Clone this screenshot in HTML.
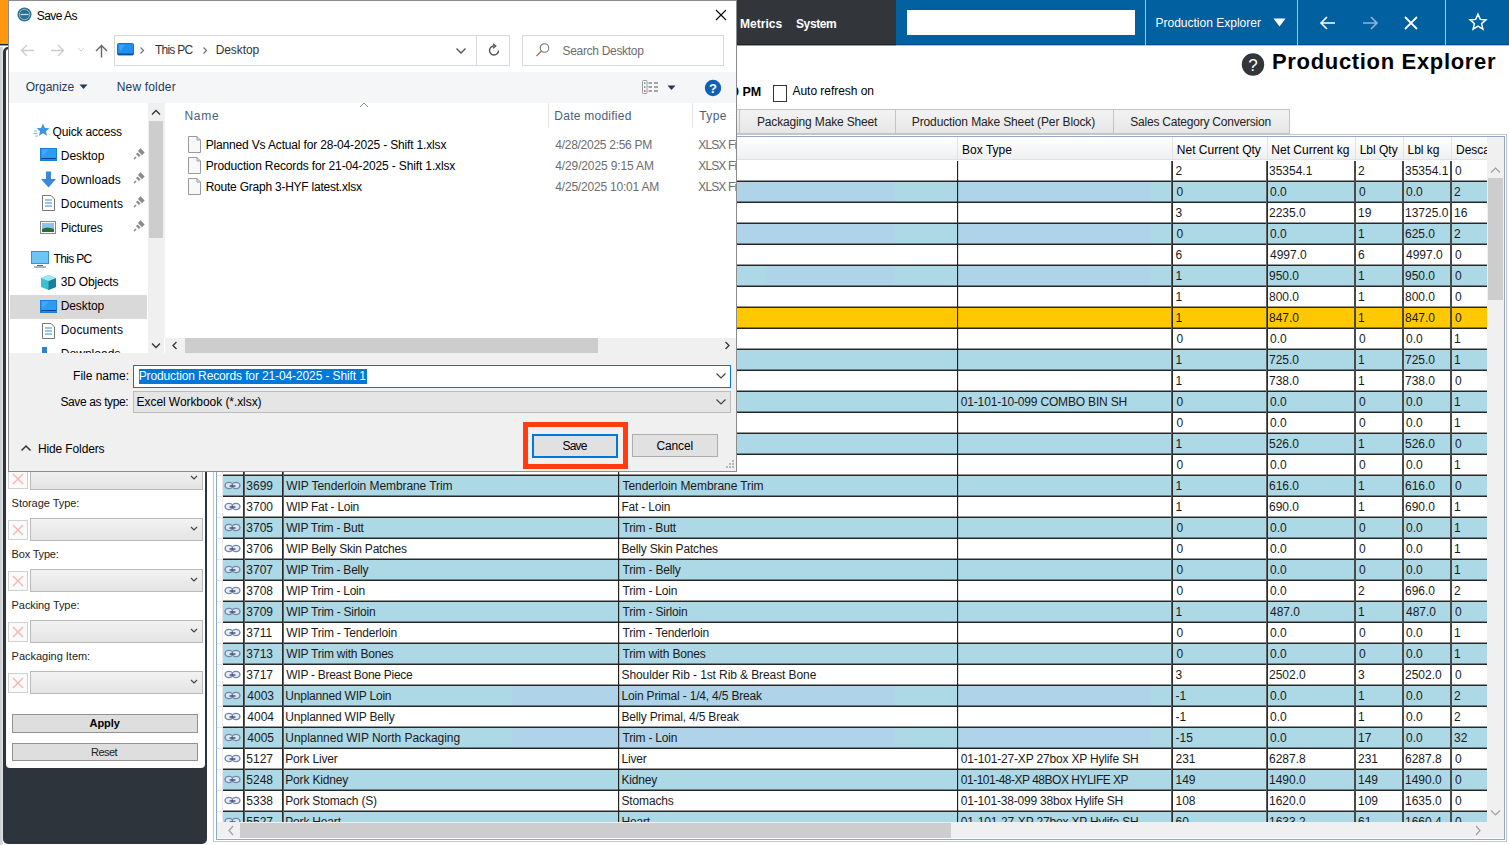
<!DOCTYPE html><html><head><meta charset="utf-8"><style>*{margin:0;padding:0}
html,body{width:1509px;height:845px;overflow:hidden;background:#fff;position:relative;font-family:"Liberation Sans", sans-serif}
div,span,svg{position:absolute}
span{white-space:nowrap}
svg text{font-family:"Liberation Sans"}
</style></head><body>
<div style="left:0px;top:47px;width:3px;height:798px;background:linear-gradient(90deg,#c9ccd0,#dfe1e3)"></div>
<div style="left:0px;top:0px;width:896px;height:45px;background:#32363b"></div>
<div style="left:896px;top:0px;width:613px;height:45px;background:#0060a0"></div>
<div style="left:896px;top:44px;width:613px;height:1px;background:#004c8f"></div>
<div style="left:0px;top:44px;width:896px;height:1px;background:#1f2428"></div>
<div style="left:896px;top:45px;width:613px;height:1px;background:#a9c6dc"></div>
<div style="left:0px;top:45px;width:896px;height:1px;background:#9a9c9e"></div>
<div style="left:907px;top:10px;width:228px;height:25px;background:#fff"></div>
<div style="left:0px;top:0px;width:8px;height:44px;background:#ff9710"></div>
<div style="left:1145px;top:0px;width:1px;height:45px;background:#a9c4dd"></div>
<div style="left:1297px;top:0px;width:1px;height:45px;background:#a9c4dd"></div>
<div style="left:1445px;top:0px;width:1px;height:45px;background:#a9c4dd"></div>
<span style="left:740.10px;top:17.64px;font-size:12px;line-height:12px;color:#fff;font-weight:bold;letter-spacing:0.000px;">Metrics</span>
<span style="left:796.00px;top:17.64px;font-size:12px;line-height:12px;color:#fff;font-weight:bold;letter-spacing:-0.400px;">System</span>
<span style="left:1155.50px;top:17.14px;font-size:12px;line-height:12px;color:#fff;font-weight:normal;letter-spacing:0.000px;">Production Explorer</span>
<svg style="left:1273px;top:18px;" width="13" height="9" viewBox="0 0 13 9"><path d="M0.5 0.5 L12.5 0.5 L6.5 8.5 Z" fill="#fff"/></svg>
<svg style="left:1318px;top:14px;" width="20" height="18" viewBox="0 0 20 18"><path d="M17 9 H3 M9 3 L3 9 L9 15" stroke="#fff" stroke-width="1.6" fill="none"/></svg>
<svg style="left:1360px;top:14px;" width="20" height="18" viewBox="0 0 20 18"><path d="M3 9 H17 M11 3 L17 9 L11 15" stroke="#8fb3d6" stroke-width="1.6" fill="none"/></svg>
<svg style="left:1402px;top:14px;" width="18" height="18" viewBox="0 0 18 18"><path d="M3 3 L15 15 M15 3 L3 15" stroke="#fff" stroke-width="1.8" fill="none"/></svg>
<svg style="left:1468px;top:12px;" width="20" height="20" viewBox="0 0 20 20"><path d="M10 2.2 L12.3 7.4 L17.9 7.9 L13.6 11.6 L14.9 17.1 L10 14.2 L5.1 17.1 L6.4 11.6 L2.1 7.9 L7.7 7.4 Z" stroke="#fff" stroke-width="1.5" fill="none" stroke-linejoin="miter"/></svg>
<svg style="left:1241px;top:53px;" width="24" height="24" viewBox="0 0 24 24"><circle cx="12" cy="11.5" r="11.2" fill="#32363b"/><text x="12" y="17.5" text-anchor="middle" font-family="Liberation Sans" font-size="17" fill="#fff">?</text></svg>
<span style="left:1272.00px;top:50.78px;font-size:22px;line-height:22px;color:#000;font-weight:bold;letter-spacing:0.667px;">Production Explorer</span>
<span style="left:725.00px;top:86.42px;font-size:12.5px;line-height:12.5px;color:#000;font-weight:bold;letter-spacing:0.000px;">00 PM</span>
<div style="left:773px;top:85px;width:14px;height:17px;border:1px solid #333;box-sizing:border-box;background:#fff"></div>
<span style="left:792.50px;top:85.14px;font-size:12px;line-height:12px;color:#000;font-weight:normal;letter-spacing:-0.036px;">Auto refresh on</span>
<div style="left:700px;top:109px;width:40px;height:25px;box-sizing:border-box;border:1px solid #c4c4c4;background:linear-gradient(#f3f3f3,#e6e6e6)"></div>
<div style="left:739px;top:109px;width:157px;height:25px;box-sizing:border-box;border:1px solid #c4c4c4;background:linear-gradient(#f3f3f3,#e6e6e6)"></div>
<span style="left:757.00px;top:116.14px;font-size:12px;line-height:12px;color:#222;font-weight:normal;letter-spacing:-0.158px;">Packaging Make Sheet</span>
<div style="left:895px;top:109px;width:219px;height:25px;box-sizing:border-box;border:1px solid #c4c4c4;background:linear-gradient(#f3f3f3,#e6e6e6)"></div>
<span style="left:911.80px;top:116.14px;font-size:12px;line-height:12px;color:#222;font-weight:normal;letter-spacing:-0.125px;">Production Make Sheet (Per Block)</span>
<div style="left:1113px;top:109px;width:177px;height:25px;box-sizing:border-box;border:1px solid #c4c4c4;background:linear-gradient(#f3f3f3,#e6e6e6)"></div>
<span style="left:1130.30px;top:116.14px;font-size:12px;line-height:12px;color:#222;font-weight:normal;letter-spacing:-0.221px;">Sales Category Conversion</span>
<div style="left:213px;top:134px;width:1294px;height:708px;box-sizing:border-box;border:1px solid #c6c6c6;background:#fff"></div>
<div style="left:216px;top:136px;width:1289px;height:704px;box-sizing:border-box;border:1px solid #8eaacb;background:#fff"></div>
<div style="left:217px;top:137px;width:1270px;height:23px;background:linear-gradient(#ffffff 0%,#f8f8f9 45%,#eeeff1 100%)"></div>
<div style="left:217px;top:159px;width:1270px;height:1px;background:#e2e2e2"></div>
<div style="left:243px;top:137px;width:1px;height:23px;background:#e3e3e3"></div>
<div style="left:282px;top:137px;width:1px;height:23px;background:#e3e3e3"></div>
<div style="left:618px;top:137px;width:1px;height:23px;background:#e3e3e3"></div>
<div style="left:957px;top:137px;width:1px;height:23px;background:#e3e3e3"></div>
<div style="left:1172px;top:137px;width:1px;height:23px;background:#e3e3e3"></div>
<div style="left:1267px;top:137px;width:1px;height:23px;background:#e3e3e3"></div>
<div style="left:1355px;top:137px;width:1px;height:23px;background:#e3e3e3"></div>
<div style="left:1403px;top:137px;width:1px;height:23px;background:#e3e3e3"></div>
<div style="left:1451px;top:137px;width:1px;height:23px;background:#e3e3e3"></div>
<span style="left:962.10px;top:143.94px;font-size:12px;line-height:12px;color:#000;font-weight:normal;letter-spacing:0.000px;">Box Type</span>
<span style="left:1176.80px;top:143.94px;font-size:12px;line-height:12px;color:#000;font-weight:normal;letter-spacing:0.000px;">Net Current Qty</span>
<span style="left:1271.30px;top:143.94px;font-size:12px;line-height:12px;color:#000;font-weight:normal;letter-spacing:0.000px;">Net Current kg</span>
<span style="left:1359.70px;top:143.94px;font-size:12px;line-height:12px;color:#000;font-weight:normal;letter-spacing:0.000px;">Lbl Qty</span>
<span style="left:1407.50px;top:143.94px;font-size:12px;line-height:12px;color:#000;font-weight:normal;letter-spacing:0.000px;">Lbl kg</span>
<span style="left:1456.00px;top:143.94px;font-size:12px;line-height:12px;color:#000;font-weight:normal;letter-spacing:0.000px;">Desca</span>
<div style="left:217px;top:160px;width:1270px;height:662px;overflow:hidden">
<div style="left:6px;top:0px;width:1264px;height:21px;background:#fff"></div>
<span style="left:958.50px;top:4.64px;font-size:12px;line-height:12px;color:#1a1a1a;font-weight:normal;letter-spacing:0.000px;">2</span>
<span style="left:1052.00px;top:4.64px;font-size:12px;line-height:12px;color:#1a1a1a;font-weight:normal;letter-spacing:0.000px;">35354.1</span>
<span style="left:1141.00px;top:4.64px;font-size:12px;line-height:12px;color:#1a1a1a;font-weight:normal;letter-spacing:0.000px;">2</span>
<span style="left:1188.00px;top:4.64px;font-size:12px;line-height:12px;color:#1a1a1a;font-weight:normal;letter-spacing:0.000px;">35354.1</span>
<span style="left:1238.00px;top:4.64px;font-size:12px;line-height:12px;color:#1a1a1a;font-weight:normal;letter-spacing:0.000px;">0</span>
<div style="left:6px;top:21px;width:1264px;height:21px;background:#add8e6"></div>
<div style="left:520px;top:21px;width:158px;height:21px;background:#afd3e8"></div>
<div style="left:740px;top:21px;width:194px;height:21px;background:#afd3e8"></div>
<div style="left:6px;top:20px;width:1264px;height:1px;background:rgba(0,0,0,0.4)"></div>
<div style="left:6px;top:21px;width:1264px;height:1px;background:#262626"></div>
<div style="left:0px;top:21px;width:6px;height:1px;background:#e6e6e6"></div>
<span style="left:959.50px;top:25.64px;font-size:12px;line-height:12px;color:#1a1a1a;font-weight:normal;letter-spacing:0.000px;">0</span>
<span style="left:1053.00px;top:25.64px;font-size:12px;line-height:12px;color:#1a1a1a;font-weight:normal;letter-spacing:0.000px;">0.0</span>
<span style="left:1142.00px;top:25.64px;font-size:12px;line-height:12px;color:#1a1a1a;font-weight:normal;letter-spacing:0.000px;">0</span>
<span style="left:1189.00px;top:25.64px;font-size:12px;line-height:12px;color:#1a1a1a;font-weight:normal;letter-spacing:0.000px;">0.0</span>
<span style="left:1237.00px;top:25.64px;font-size:12px;line-height:12px;color:#1a1a1a;font-weight:normal;letter-spacing:0.000px;">2</span>
<div style="left:6px;top:42px;width:1264px;height:21px;background:#fff"></div>
<div style="left:6px;top:41px;width:1264px;height:1px;background:rgba(0,0,0,0.4)"></div>
<div style="left:6px;top:42px;width:1264px;height:1px;background:#262626"></div>
<div style="left:0px;top:42px;width:6px;height:1px;background:#e6e6e6"></div>
<span style="left:958.50px;top:46.64px;font-size:12px;line-height:12px;color:#1a1a1a;font-weight:normal;letter-spacing:0.000px;">3</span>
<span style="left:1052.00px;top:46.64px;font-size:12px;line-height:12px;color:#1a1a1a;font-weight:normal;letter-spacing:0.000px;">2235.0</span>
<span style="left:1141.00px;top:46.64px;font-size:12px;line-height:12px;color:#1a1a1a;font-weight:normal;letter-spacing:0.000px;">19</span>
<span style="left:1188.00px;top:46.64px;font-size:12px;line-height:12px;color:#1a1a1a;font-weight:normal;letter-spacing:0.000px;">13725.0</span>
<span style="left:1237.00px;top:46.64px;font-size:12px;line-height:12px;color:#1a1a1a;font-weight:normal;letter-spacing:0.000px;">16</span>
<div style="left:6px;top:63px;width:1264px;height:21px;background:#add8e6"></div>
<div style="left:520px;top:63px;width:158px;height:21px;background:#afd3e8"></div>
<div style="left:740px;top:63px;width:194px;height:21px;background:#afd3e8"></div>
<div style="left:6px;top:62px;width:1264px;height:1px;background:rgba(0,0,0,0.4)"></div>
<div style="left:6px;top:63px;width:1264px;height:1px;background:#262626"></div>
<div style="left:0px;top:63px;width:6px;height:1px;background:#e6e6e6"></div>
<span style="left:959.50px;top:67.64px;font-size:12px;line-height:12px;color:#1a1a1a;font-weight:normal;letter-spacing:0.000px;">0</span>
<span style="left:1053.00px;top:67.64px;font-size:12px;line-height:12px;color:#1a1a1a;font-weight:normal;letter-spacing:0.000px;">0.0</span>
<span style="left:1141.00px;top:67.64px;font-size:12px;line-height:12px;color:#1a1a1a;font-weight:normal;letter-spacing:0.000px;">1</span>
<span style="left:1188.00px;top:67.64px;font-size:12px;line-height:12px;color:#1a1a1a;font-weight:normal;letter-spacing:0.000px;">625.0</span>
<span style="left:1237.00px;top:67.64px;font-size:12px;line-height:12px;color:#1a1a1a;font-weight:normal;letter-spacing:0.000px;">2</span>
<div style="left:6px;top:84px;width:1264px;height:21px;background:#fff"></div>
<div style="left:6px;top:83px;width:1264px;height:1px;background:rgba(0,0,0,0.4)"></div>
<div style="left:6px;top:84px;width:1264px;height:1px;background:#262626"></div>
<div style="left:0px;top:84px;width:6px;height:1px;background:#e6e6e6"></div>
<span style="left:958.50px;top:88.64px;font-size:12px;line-height:12px;color:#1a1a1a;font-weight:normal;letter-spacing:0.000px;">6</span>
<span style="left:1053.00px;top:88.64px;font-size:12px;line-height:12px;color:#1a1a1a;font-weight:normal;letter-spacing:0.000px;">4997.0</span>
<span style="left:1141.00px;top:88.64px;font-size:12px;line-height:12px;color:#1a1a1a;font-weight:normal;letter-spacing:0.000px;">6</span>
<span style="left:1189.00px;top:88.64px;font-size:12px;line-height:12px;color:#1a1a1a;font-weight:normal;letter-spacing:0.000px;">4997.0</span>
<span style="left:1238.00px;top:88.64px;font-size:12px;line-height:12px;color:#1a1a1a;font-weight:normal;letter-spacing:0.000px;">0</span>
<div style="left:6px;top:105px;width:1264px;height:21px;background:#add8e6"></div>
<div style="left:550px;top:105px;width:128px;height:21px;background:#afd3e8"></div>
<div style="left:740px;top:105px;width:194px;height:21px;background:#afd3e8"></div>
<div style="left:6px;top:104px;width:1264px;height:1px;background:rgba(0,0,0,0.4)"></div>
<div style="left:6px;top:105px;width:1264px;height:1px;background:#262626"></div>
<div style="left:0px;top:105px;width:6px;height:1px;background:#e6e6e6"></div>
<span style="left:958.50px;top:109.64px;font-size:12px;line-height:12px;color:#1a1a1a;font-weight:normal;letter-spacing:0.000px;">1</span>
<span style="left:1052.00px;top:109.64px;font-size:12px;line-height:12px;color:#1a1a1a;font-weight:normal;letter-spacing:0.000px;">950.0</span>
<span style="left:1141.00px;top:109.64px;font-size:12px;line-height:12px;color:#1a1a1a;font-weight:normal;letter-spacing:0.000px;">1</span>
<span style="left:1188.00px;top:109.64px;font-size:12px;line-height:12px;color:#1a1a1a;font-weight:normal;letter-spacing:0.000px;">950.0</span>
<span style="left:1238.00px;top:109.64px;font-size:12px;line-height:12px;color:#1a1a1a;font-weight:normal;letter-spacing:0.000px;">0</span>
<div style="left:6px;top:126px;width:1264px;height:21px;background:#fff"></div>
<div style="left:6px;top:125px;width:1264px;height:1px;background:rgba(0,0,0,0.4)"></div>
<div style="left:6px;top:126px;width:1264px;height:1px;background:#262626"></div>
<div style="left:0px;top:126px;width:6px;height:1px;background:#e6e6e6"></div>
<span style="left:958.50px;top:130.64px;font-size:12px;line-height:12px;color:#1a1a1a;font-weight:normal;letter-spacing:0.000px;">1</span>
<span style="left:1052.00px;top:130.64px;font-size:12px;line-height:12px;color:#1a1a1a;font-weight:normal;letter-spacing:0.000px;">800.0</span>
<span style="left:1141.00px;top:130.64px;font-size:12px;line-height:12px;color:#1a1a1a;font-weight:normal;letter-spacing:0.000px;">1</span>
<span style="left:1188.00px;top:130.64px;font-size:12px;line-height:12px;color:#1a1a1a;font-weight:normal;letter-spacing:0.000px;">800.0</span>
<span style="left:1238.00px;top:130.64px;font-size:12px;line-height:12px;color:#1a1a1a;font-weight:normal;letter-spacing:0.000px;">0</span>
<div style="left:6px;top:147px;width:1264px;height:21px;background:#ffc800"></div>
<div style="left:6px;top:146px;width:1264px;height:1px;background:rgba(0,0,0,0.4)"></div>
<div style="left:6px;top:147px;width:1264px;height:1px;background:#262626"></div>
<div style="left:0px;top:147px;width:6px;height:1px;background:#e6e6e6"></div>
<span style="left:958.50px;top:151.64px;font-size:12px;line-height:12px;color:#1a1a1a;font-weight:normal;letter-spacing:0.000px;">1</span>
<span style="left:1052.00px;top:151.64px;font-size:12px;line-height:12px;color:#1a1a1a;font-weight:normal;letter-spacing:0.000px;">847.0</span>
<span style="left:1141.00px;top:151.64px;font-size:12px;line-height:12px;color:#1a1a1a;font-weight:normal;letter-spacing:0.000px;">1</span>
<span style="left:1188.00px;top:151.64px;font-size:12px;line-height:12px;color:#1a1a1a;font-weight:normal;letter-spacing:0.000px;">847.0</span>
<span style="left:1238.00px;top:151.64px;font-size:12px;line-height:12px;color:#1a1a1a;font-weight:normal;letter-spacing:0.000px;">0</span>
<div style="left:6px;top:168px;width:1264px;height:21px;background:#fff"></div>
<div style="left:6px;top:167px;width:1264px;height:1px;background:rgba(0,0,0,0.4)"></div>
<div style="left:6px;top:168px;width:1264px;height:1px;background:#262626"></div>
<div style="left:0px;top:168px;width:6px;height:1px;background:#e6e6e6"></div>
<span style="left:959.50px;top:172.64px;font-size:12px;line-height:12px;color:#1a1a1a;font-weight:normal;letter-spacing:0.000px;">0</span>
<span style="left:1053.00px;top:172.64px;font-size:12px;line-height:12px;color:#1a1a1a;font-weight:normal;letter-spacing:0.000px;">0.0</span>
<span style="left:1142.00px;top:172.64px;font-size:12px;line-height:12px;color:#1a1a1a;font-weight:normal;letter-spacing:0.000px;">0</span>
<span style="left:1189.00px;top:172.64px;font-size:12px;line-height:12px;color:#1a1a1a;font-weight:normal;letter-spacing:0.000px;">0.0</span>
<span style="left:1237.00px;top:172.64px;font-size:12px;line-height:12px;color:#1a1a1a;font-weight:normal;letter-spacing:0.000px;">1</span>
<div style="left:6px;top:189px;width:1264px;height:21px;background:#add8e6"></div>
<div style="left:6px;top:188px;width:1264px;height:1px;background:rgba(0,0,0,0.4)"></div>
<div style="left:6px;top:189px;width:1264px;height:1px;background:#262626"></div>
<div style="left:0px;top:189px;width:6px;height:1px;background:#e6e6e6"></div>
<span style="left:958.50px;top:193.64px;font-size:12px;line-height:12px;color:#1a1a1a;font-weight:normal;letter-spacing:0.000px;">1</span>
<span style="left:1052.00px;top:193.64px;font-size:12px;line-height:12px;color:#1a1a1a;font-weight:normal;letter-spacing:0.000px;">725.0</span>
<span style="left:1141.00px;top:193.64px;font-size:12px;line-height:12px;color:#1a1a1a;font-weight:normal;letter-spacing:0.000px;">1</span>
<span style="left:1188.00px;top:193.64px;font-size:12px;line-height:12px;color:#1a1a1a;font-weight:normal;letter-spacing:0.000px;">725.0</span>
<span style="left:1237.00px;top:193.64px;font-size:12px;line-height:12px;color:#1a1a1a;font-weight:normal;letter-spacing:0.000px;">1</span>
<div style="left:6px;top:210px;width:1264px;height:21px;background:#fff"></div>
<div style="left:6px;top:209px;width:1264px;height:1px;background:rgba(0,0,0,0.4)"></div>
<div style="left:6px;top:210px;width:1264px;height:1px;background:#262626"></div>
<div style="left:0px;top:210px;width:6px;height:1px;background:#e6e6e6"></div>
<span style="left:958.50px;top:214.64px;font-size:12px;line-height:12px;color:#1a1a1a;font-weight:normal;letter-spacing:0.000px;">1</span>
<span style="left:1052.00px;top:214.64px;font-size:12px;line-height:12px;color:#1a1a1a;font-weight:normal;letter-spacing:0.000px;">738.0</span>
<span style="left:1141.00px;top:214.64px;font-size:12px;line-height:12px;color:#1a1a1a;font-weight:normal;letter-spacing:0.000px;">1</span>
<span style="left:1188.00px;top:214.64px;font-size:12px;line-height:12px;color:#1a1a1a;font-weight:normal;letter-spacing:0.000px;">738.0</span>
<span style="left:1238.00px;top:214.64px;font-size:12px;line-height:12px;color:#1a1a1a;font-weight:normal;letter-spacing:0.000px;">0</span>
<div style="left:6px;top:231px;width:1264px;height:21px;background:#add8e6"></div>
<div style="left:6px;top:230px;width:1264px;height:1px;background:rgba(0,0,0,0.4)"></div>
<div style="left:6px;top:231px;width:1264px;height:1px;background:#262626"></div>
<div style="left:0px;top:231px;width:6px;height:1px;background:#e6e6e6"></div>
<span style="left:743.80px;top:235.64px;font-size:12px;line-height:12px;color:#1a1a1a;font-weight:normal;letter-spacing:-0.172px;">01-101-10-099 COMBO BIN SH</span>
<span style="left:959.50px;top:235.64px;font-size:12px;line-height:12px;color:#1a1a1a;font-weight:normal;letter-spacing:0.000px;">0</span>
<span style="left:1053.00px;top:235.64px;font-size:12px;line-height:12px;color:#1a1a1a;font-weight:normal;letter-spacing:0.000px;">0.0</span>
<span style="left:1142.00px;top:235.64px;font-size:12px;line-height:12px;color:#1a1a1a;font-weight:normal;letter-spacing:0.000px;">0</span>
<span style="left:1189.00px;top:235.64px;font-size:12px;line-height:12px;color:#1a1a1a;font-weight:normal;letter-spacing:0.000px;">0.0</span>
<span style="left:1237.00px;top:235.64px;font-size:12px;line-height:12px;color:#1a1a1a;font-weight:normal;letter-spacing:0.000px;">1</span>
<div style="left:6px;top:252px;width:1264px;height:21px;background:#fff"></div>
<div style="left:6px;top:251px;width:1264px;height:1px;background:rgba(0,0,0,0.4)"></div>
<div style="left:6px;top:252px;width:1264px;height:1px;background:#262626"></div>
<div style="left:0px;top:252px;width:6px;height:1px;background:#e6e6e6"></div>
<span style="left:959.50px;top:256.64px;font-size:12px;line-height:12px;color:#1a1a1a;font-weight:normal;letter-spacing:0.000px;">0</span>
<span style="left:1053.00px;top:256.64px;font-size:12px;line-height:12px;color:#1a1a1a;font-weight:normal;letter-spacing:0.000px;">0.0</span>
<span style="left:1142.00px;top:256.64px;font-size:12px;line-height:12px;color:#1a1a1a;font-weight:normal;letter-spacing:0.000px;">0</span>
<span style="left:1189.00px;top:256.64px;font-size:12px;line-height:12px;color:#1a1a1a;font-weight:normal;letter-spacing:0.000px;">0.0</span>
<span style="left:1237.00px;top:256.64px;font-size:12px;line-height:12px;color:#1a1a1a;font-weight:normal;letter-spacing:0.000px;">1</span>
<div style="left:6px;top:273px;width:1264px;height:21px;background:#add8e6"></div>
<div style="left:6px;top:272px;width:1264px;height:1px;background:rgba(0,0,0,0.4)"></div>
<div style="left:6px;top:273px;width:1264px;height:1px;background:#262626"></div>
<div style="left:0px;top:273px;width:6px;height:1px;background:#e6e6e6"></div>
<span style="left:958.50px;top:277.64px;font-size:12px;line-height:12px;color:#1a1a1a;font-weight:normal;letter-spacing:0.000px;">1</span>
<span style="left:1052.00px;top:277.64px;font-size:12px;line-height:12px;color:#1a1a1a;font-weight:normal;letter-spacing:0.000px;">526.0</span>
<span style="left:1141.00px;top:277.64px;font-size:12px;line-height:12px;color:#1a1a1a;font-weight:normal;letter-spacing:0.000px;">1</span>
<span style="left:1188.00px;top:277.64px;font-size:12px;line-height:12px;color:#1a1a1a;font-weight:normal;letter-spacing:0.000px;">526.0</span>
<span style="left:1238.00px;top:277.64px;font-size:12px;line-height:12px;color:#1a1a1a;font-weight:normal;letter-spacing:0.000px;">0</span>
<div style="left:6px;top:294px;width:1264px;height:21px;background:#fff"></div>
<div style="left:6px;top:293px;width:1264px;height:1px;background:rgba(0,0,0,0.4)"></div>
<div style="left:6px;top:294px;width:1264px;height:1px;background:#262626"></div>
<div style="left:0px;top:294px;width:6px;height:1px;background:#e6e6e6"></div>
<span style="left:959.50px;top:298.64px;font-size:12px;line-height:12px;color:#1a1a1a;font-weight:normal;letter-spacing:0.000px;">0</span>
<span style="left:1053.00px;top:298.64px;font-size:12px;line-height:12px;color:#1a1a1a;font-weight:normal;letter-spacing:0.000px;">0.0</span>
<span style="left:1142.00px;top:298.64px;font-size:12px;line-height:12px;color:#1a1a1a;font-weight:normal;letter-spacing:0.000px;">0</span>
<span style="left:1189.00px;top:298.64px;font-size:12px;line-height:12px;color:#1a1a1a;font-weight:normal;letter-spacing:0.000px;">0.0</span>
<span style="left:1237.00px;top:298.64px;font-size:12px;line-height:12px;color:#1a1a1a;font-weight:normal;letter-spacing:0.000px;">1</span>
<div style="left:6px;top:315px;width:1264px;height:21px;background:#add8e6"></div>
<div style="left:6px;top:314px;width:1264px;height:1px;background:rgba(0,0,0,0.4)"></div>
<div style="left:6px;top:315px;width:1264px;height:1px;background:#262626"></div>
<div style="left:0px;top:315px;width:6px;height:1px;background:#e6e6e6"></div>
<div style="left:7px;top:321px;width:17px;height:9px"><svg width="17" height="9" viewBox="0 0 17 9"><ellipse cx="5" cy="4.5" rx="3.9" ry="3.1" fill="#e6ebf4" fill-opacity="0.8" stroke="#7485aa" stroke-width="1.4"/><ellipse cx="12" cy="4.5" rx="3.9" ry="3.1" fill="#e6ebf4" fill-opacity="0.8" stroke="#7485aa" stroke-width="1.4"/><path d="M5.5 5 H11.5" stroke="#2c4070" stroke-width="1.3"/></svg></div>
<span style="left:29.30px;top:319.64px;font-size:12px;line-height:12px;color:#1a1a1a;font-weight:normal;letter-spacing:0.000px;">3699</span>
<span style="left:69.30px;top:319.64px;font-size:12px;line-height:12px;color:#1a1a1a;font-weight:normal;letter-spacing:-0.074px;">WIP Tenderloin Membrane Trim</span>
<span style="left:405.50px;top:319.64px;font-size:12px;line-height:12px;color:#1a1a1a;font-weight:normal;letter-spacing:-0.070px;">Tenderloin Membrane Trim</span>
<span style="left:958.50px;top:319.64px;font-size:12px;line-height:12px;color:#1a1a1a;font-weight:normal;letter-spacing:0.000px;">1</span>
<span style="left:1052.00px;top:319.64px;font-size:12px;line-height:12px;color:#1a1a1a;font-weight:normal;letter-spacing:0.000px;">616.0</span>
<span style="left:1141.00px;top:319.64px;font-size:12px;line-height:12px;color:#1a1a1a;font-weight:normal;letter-spacing:0.000px;">1</span>
<span style="left:1188.00px;top:319.64px;font-size:12px;line-height:12px;color:#1a1a1a;font-weight:normal;letter-spacing:0.000px;">616.0</span>
<span style="left:1238.00px;top:319.64px;font-size:12px;line-height:12px;color:#1a1a1a;font-weight:normal;letter-spacing:0.000px;">0</span>
<div style="left:6px;top:336px;width:1264px;height:21px;background:#fff"></div>
<div style="left:6px;top:335px;width:1264px;height:1px;background:rgba(0,0,0,0.4)"></div>
<div style="left:6px;top:336px;width:1264px;height:1px;background:#262626"></div>
<div style="left:0px;top:336px;width:6px;height:1px;background:#e6e6e6"></div>
<div style="left:7px;top:342px;width:17px;height:9px"><svg width="17" height="9" viewBox="0 0 17 9"><ellipse cx="5" cy="4.5" rx="3.9" ry="3.1" fill="#e6ebf4" fill-opacity="0.8" stroke="#7485aa" stroke-width="1.4"/><ellipse cx="12" cy="4.5" rx="3.9" ry="3.1" fill="#e6ebf4" fill-opacity="0.8" stroke="#7485aa" stroke-width="1.4"/><path d="M5.5 5 H11.5" stroke="#2c4070" stroke-width="1.3"/></svg></div>
<span style="left:29.30px;top:340.64px;font-size:12px;line-height:12px;color:#1a1a1a;font-weight:normal;letter-spacing:0.000px;">3700</span>
<span style="left:69.30px;top:340.64px;font-size:12px;line-height:12px;color:#1a1a1a;font-weight:normal;letter-spacing:-0.270px;">WIP Fat - Loin</span>
<span style="left:404.50px;top:340.64px;font-size:12px;line-height:12px;color:#1a1a1a;font-weight:normal;letter-spacing:-0.206px;">Fat - Loin</span>
<span style="left:958.50px;top:340.64px;font-size:12px;line-height:12px;color:#1a1a1a;font-weight:normal;letter-spacing:0.000px;">1</span>
<span style="left:1052.00px;top:340.64px;font-size:12px;line-height:12px;color:#1a1a1a;font-weight:normal;letter-spacing:0.000px;">690.0</span>
<span style="left:1141.00px;top:340.64px;font-size:12px;line-height:12px;color:#1a1a1a;font-weight:normal;letter-spacing:0.000px;">1</span>
<span style="left:1188.00px;top:340.64px;font-size:12px;line-height:12px;color:#1a1a1a;font-weight:normal;letter-spacing:0.000px;">690.0</span>
<span style="left:1237.00px;top:340.64px;font-size:12px;line-height:12px;color:#1a1a1a;font-weight:normal;letter-spacing:0.000px;">1</span>
<div style="left:6px;top:357px;width:1264px;height:21px;background:#add8e6"></div>
<div style="left:6px;top:356px;width:1264px;height:1px;background:rgba(0,0,0,0.4)"></div>
<div style="left:6px;top:357px;width:1264px;height:1px;background:#262626"></div>
<div style="left:0px;top:357px;width:6px;height:1px;background:#e6e6e6"></div>
<div style="left:7px;top:363px;width:17px;height:9px"><svg width="17" height="9" viewBox="0 0 17 9"><ellipse cx="5" cy="4.5" rx="3.9" ry="3.1" fill="#e6ebf4" fill-opacity="0.8" stroke="#7485aa" stroke-width="1.4"/><ellipse cx="12" cy="4.5" rx="3.9" ry="3.1" fill="#e6ebf4" fill-opacity="0.8" stroke="#7485aa" stroke-width="1.4"/><path d="M5.5 5 H11.5" stroke="#2c4070" stroke-width="1.3"/></svg></div>
<span style="left:29.30px;top:361.64px;font-size:12px;line-height:12px;color:#1a1a1a;font-weight:normal;letter-spacing:0.000px;">3705</span>
<span style="left:69.30px;top:361.64px;font-size:12px;line-height:12px;color:#1a1a1a;font-weight:normal;letter-spacing:-0.256px;">WIP Trim - Butt</span>
<span style="left:405.50px;top:361.64px;font-size:12px;line-height:12px;color:#1a1a1a;font-weight:normal;letter-spacing:-0.195px;">Trim - Butt</span>
<span style="left:959.50px;top:361.64px;font-size:12px;line-height:12px;color:#1a1a1a;font-weight:normal;letter-spacing:0.000px;">0</span>
<span style="left:1053.00px;top:361.64px;font-size:12px;line-height:12px;color:#1a1a1a;font-weight:normal;letter-spacing:0.000px;">0.0</span>
<span style="left:1142.00px;top:361.64px;font-size:12px;line-height:12px;color:#1a1a1a;font-weight:normal;letter-spacing:0.000px;">0</span>
<span style="left:1189.00px;top:361.64px;font-size:12px;line-height:12px;color:#1a1a1a;font-weight:normal;letter-spacing:0.000px;">0.0</span>
<span style="left:1237.00px;top:361.64px;font-size:12px;line-height:12px;color:#1a1a1a;font-weight:normal;letter-spacing:0.000px;">1</span>
<div style="left:6px;top:378px;width:1264px;height:21px;background:#fff"></div>
<div style="left:6px;top:377px;width:1264px;height:1px;background:rgba(0,0,0,0.4)"></div>
<div style="left:6px;top:378px;width:1264px;height:1px;background:#262626"></div>
<div style="left:0px;top:378px;width:6px;height:1px;background:#e6e6e6"></div>
<div style="left:7px;top:384px;width:17px;height:9px"><svg width="17" height="9" viewBox="0 0 17 9"><ellipse cx="5" cy="4.5" rx="3.9" ry="3.1" fill="#e6ebf4" fill-opacity="0.8" stroke="#7485aa" stroke-width="1.4"/><ellipse cx="12" cy="4.5" rx="3.9" ry="3.1" fill="#e6ebf4" fill-opacity="0.8" stroke="#7485aa" stroke-width="1.4"/><path d="M5.5 5 H11.5" stroke="#2c4070" stroke-width="1.3"/></svg></div>
<span style="left:29.30px;top:382.64px;font-size:12px;line-height:12px;color:#1a1a1a;font-weight:normal;letter-spacing:0.000px;">3706</span>
<span style="left:69.30px;top:382.64px;font-size:12px;line-height:12px;color:#1a1a1a;font-weight:normal;letter-spacing:-0.215px;">WIP Belly Skin Patches</span>
<span style="left:404.50px;top:382.64px;font-size:12px;line-height:12px;color:#1a1a1a;font-weight:normal;letter-spacing:-0.176px;">Belly Skin Patches</span>
<span style="left:959.50px;top:382.64px;font-size:12px;line-height:12px;color:#1a1a1a;font-weight:normal;letter-spacing:0.000px;">0</span>
<span style="left:1053.00px;top:382.64px;font-size:12px;line-height:12px;color:#1a1a1a;font-weight:normal;letter-spacing:0.000px;">0.0</span>
<span style="left:1142.00px;top:382.64px;font-size:12px;line-height:12px;color:#1a1a1a;font-weight:normal;letter-spacing:0.000px;">0</span>
<span style="left:1189.00px;top:382.64px;font-size:12px;line-height:12px;color:#1a1a1a;font-weight:normal;letter-spacing:0.000px;">0.0</span>
<span style="left:1237.00px;top:382.64px;font-size:12px;line-height:12px;color:#1a1a1a;font-weight:normal;letter-spacing:0.000px;">1</span>
<div style="left:6px;top:399px;width:1264px;height:21px;background:#add8e6"></div>
<div style="left:6px;top:398px;width:1264px;height:1px;background:rgba(0,0,0,0.4)"></div>
<div style="left:6px;top:399px;width:1264px;height:1px;background:#262626"></div>
<div style="left:0px;top:399px;width:6px;height:1px;background:#e6e6e6"></div>
<div style="left:7px;top:405px;width:17px;height:9px"><svg width="17" height="9" viewBox="0 0 17 9"><ellipse cx="5" cy="4.5" rx="3.9" ry="3.1" fill="#e6ebf4" fill-opacity="0.8" stroke="#7485aa" stroke-width="1.4"/><ellipse cx="12" cy="4.5" rx="3.9" ry="3.1" fill="#e6ebf4" fill-opacity="0.8" stroke="#7485aa" stroke-width="1.4"/><path d="M5.5 5 H11.5" stroke="#2c4070" stroke-width="1.3"/></svg></div>
<span style="left:29.30px;top:403.64px;font-size:12px;line-height:12px;color:#1a1a1a;font-weight:normal;letter-spacing:0.000px;">3707</span>
<span style="left:69.30px;top:403.64px;font-size:12px;line-height:12px;color:#1a1a1a;font-weight:normal;letter-spacing:-0.245px;">WIP Trim - Belly</span>
<span style="left:405.50px;top:403.64px;font-size:12px;line-height:12px;color:#1a1a1a;font-weight:normal;letter-spacing:-0.187px;">Trim - Belly</span>
<span style="left:959.50px;top:403.64px;font-size:12px;line-height:12px;color:#1a1a1a;font-weight:normal;letter-spacing:0.000px;">0</span>
<span style="left:1053.00px;top:403.64px;font-size:12px;line-height:12px;color:#1a1a1a;font-weight:normal;letter-spacing:0.000px;">0.0</span>
<span style="left:1142.00px;top:403.64px;font-size:12px;line-height:12px;color:#1a1a1a;font-weight:normal;letter-spacing:0.000px;">0</span>
<span style="left:1189.00px;top:403.64px;font-size:12px;line-height:12px;color:#1a1a1a;font-weight:normal;letter-spacing:0.000px;">0.0</span>
<span style="left:1237.00px;top:403.64px;font-size:12px;line-height:12px;color:#1a1a1a;font-weight:normal;letter-spacing:0.000px;">1</span>
<div style="left:6px;top:420px;width:1264px;height:21px;background:#fff"></div>
<div style="left:6px;top:419px;width:1264px;height:1px;background:rgba(0,0,0,0.4)"></div>
<div style="left:6px;top:420px;width:1264px;height:1px;background:#262626"></div>
<div style="left:0px;top:420px;width:6px;height:1px;background:#e6e6e6"></div>
<div style="left:7px;top:426px;width:17px;height:9px"><svg width="17" height="9" viewBox="0 0 17 9"><ellipse cx="5" cy="4.5" rx="3.9" ry="3.1" fill="#e6ebf4" fill-opacity="0.8" stroke="#7485aa" stroke-width="1.4"/><ellipse cx="12" cy="4.5" rx="3.9" ry="3.1" fill="#e6ebf4" fill-opacity="0.8" stroke="#7485aa" stroke-width="1.4"/><path d="M5.5 5 H11.5" stroke="#2c4070" stroke-width="1.3"/></svg></div>
<span style="left:29.30px;top:424.64px;font-size:12px;line-height:12px;color:#1a1a1a;font-weight:normal;letter-spacing:0.000px;">3708</span>
<span style="left:69.30px;top:424.64px;font-size:12px;line-height:12px;color:#1a1a1a;font-weight:normal;letter-spacing:-0.256px;">WIP Trim - Loin</span>
<span style="left:405.50px;top:424.64px;font-size:12px;line-height:12px;color:#1a1a1a;font-weight:normal;letter-spacing:-0.195px;">Trim - Loin</span>
<span style="left:959.50px;top:424.64px;font-size:12px;line-height:12px;color:#1a1a1a;font-weight:normal;letter-spacing:0.000px;">0</span>
<span style="left:1053.00px;top:424.64px;font-size:12px;line-height:12px;color:#1a1a1a;font-weight:normal;letter-spacing:0.000px;">0.0</span>
<span style="left:1141.00px;top:424.64px;font-size:12px;line-height:12px;color:#1a1a1a;font-weight:normal;letter-spacing:0.000px;">2</span>
<span style="left:1188.00px;top:424.64px;font-size:12px;line-height:12px;color:#1a1a1a;font-weight:normal;letter-spacing:0.000px;">696.0</span>
<span style="left:1237.00px;top:424.64px;font-size:12px;line-height:12px;color:#1a1a1a;font-weight:normal;letter-spacing:0.000px;">2</span>
<div style="left:6px;top:441px;width:1264px;height:21px;background:#add8e6"></div>
<div style="left:6px;top:440px;width:1264px;height:1px;background:rgba(0,0,0,0.4)"></div>
<div style="left:6px;top:441px;width:1264px;height:1px;background:#262626"></div>
<div style="left:0px;top:441px;width:6px;height:1px;background:#e6e6e6"></div>
<div style="left:7px;top:447px;width:17px;height:9px"><svg width="17" height="9" viewBox="0 0 17 9"><ellipse cx="5" cy="4.5" rx="3.9" ry="3.1" fill="#e6ebf4" fill-opacity="0.8" stroke="#7485aa" stroke-width="1.4"/><ellipse cx="12" cy="4.5" rx="3.9" ry="3.1" fill="#e6ebf4" fill-opacity="0.8" stroke="#7485aa" stroke-width="1.4"/><path d="M5.5 5 H11.5" stroke="#2c4070" stroke-width="1.3"/></svg></div>
<span style="left:29.30px;top:445.64px;font-size:12px;line-height:12px;color:#1a1a1a;font-weight:normal;letter-spacing:0.000px;">3709</span>
<span style="left:69.30px;top:445.64px;font-size:12px;line-height:12px;color:#1a1a1a;font-weight:normal;letter-spacing:-0.227px;">WIP Trim - Sirloin</span>
<span style="left:405.50px;top:445.64px;font-size:12px;line-height:12px;color:#1a1a1a;font-weight:normal;letter-spacing:-0.175px;">Trim - Sirloin</span>
<span style="left:958.50px;top:445.64px;font-size:12px;line-height:12px;color:#1a1a1a;font-weight:normal;letter-spacing:0.000px;">1</span>
<span style="left:1053.00px;top:445.64px;font-size:12px;line-height:12px;color:#1a1a1a;font-weight:normal;letter-spacing:0.000px;">487.0</span>
<span style="left:1141.00px;top:445.64px;font-size:12px;line-height:12px;color:#1a1a1a;font-weight:normal;letter-spacing:0.000px;">1</span>
<span style="left:1189.00px;top:445.64px;font-size:12px;line-height:12px;color:#1a1a1a;font-weight:normal;letter-spacing:0.000px;">487.0</span>
<span style="left:1238.00px;top:445.64px;font-size:12px;line-height:12px;color:#1a1a1a;font-weight:normal;letter-spacing:0.000px;">0</span>
<div style="left:6px;top:462px;width:1264px;height:21px;background:#fff"></div>
<div style="left:6px;top:461px;width:1264px;height:1px;background:rgba(0,0,0,0.4)"></div>
<div style="left:6px;top:462px;width:1264px;height:1px;background:#262626"></div>
<div style="left:0px;top:462px;width:6px;height:1px;background:#e6e6e6"></div>
<div style="left:7px;top:468px;width:17px;height:9px"><svg width="17" height="9" viewBox="0 0 17 9"><ellipse cx="5" cy="4.5" rx="3.9" ry="3.1" fill="#e6ebf4" fill-opacity="0.8" stroke="#7485aa" stroke-width="1.4"/><ellipse cx="12" cy="4.5" rx="3.9" ry="3.1" fill="#e6ebf4" fill-opacity="0.8" stroke="#7485aa" stroke-width="1.4"/><path d="M5.5 5 H11.5" stroke="#2c4070" stroke-width="1.3"/></svg></div>
<span style="left:29.30px;top:466.64px;font-size:12px;line-height:12px;color:#1a1a1a;font-weight:normal;letter-spacing:0.000px;">3711</span>
<span style="left:69.30px;top:466.64px;font-size:12px;line-height:12px;color:#1a1a1a;font-weight:normal;letter-spacing:-0.208px;">WIP Trim - Tenderloin</span>
<span style="left:405.50px;top:466.64px;font-size:12px;line-height:12px;color:#1a1a1a;font-weight:normal;letter-spacing:-0.163px;">Trim - Tenderloin</span>
<span style="left:959.50px;top:466.64px;font-size:12px;line-height:12px;color:#1a1a1a;font-weight:normal;letter-spacing:0.000px;">0</span>
<span style="left:1053.00px;top:466.64px;font-size:12px;line-height:12px;color:#1a1a1a;font-weight:normal;letter-spacing:0.000px;">0.0</span>
<span style="left:1142.00px;top:466.64px;font-size:12px;line-height:12px;color:#1a1a1a;font-weight:normal;letter-spacing:0.000px;">0</span>
<span style="left:1189.00px;top:466.64px;font-size:12px;line-height:12px;color:#1a1a1a;font-weight:normal;letter-spacing:0.000px;">0.0</span>
<span style="left:1237.00px;top:466.64px;font-size:12px;line-height:12px;color:#1a1a1a;font-weight:normal;letter-spacing:0.000px;">1</span>
<div style="left:6px;top:483px;width:1264px;height:21px;background:#add8e6"></div>
<div style="left:6px;top:482px;width:1264px;height:1px;background:rgba(0,0,0,0.4)"></div>
<div style="left:6px;top:483px;width:1264px;height:1px;background:#262626"></div>
<div style="left:0px;top:483px;width:6px;height:1px;background:#e6e6e6"></div>
<div style="left:7px;top:489px;width:17px;height:9px"><svg width="17" height="9" viewBox="0 0 17 9"><ellipse cx="5" cy="4.5" rx="3.9" ry="3.1" fill="#e6ebf4" fill-opacity="0.8" stroke="#7485aa" stroke-width="1.4"/><ellipse cx="12" cy="4.5" rx="3.9" ry="3.1" fill="#e6ebf4" fill-opacity="0.8" stroke="#7485aa" stroke-width="1.4"/><path d="M5.5 5 H11.5" stroke="#2c4070" stroke-width="1.3"/></svg></div>
<span style="left:29.30px;top:487.64px;font-size:12px;line-height:12px;color:#1a1a1a;font-weight:normal;letter-spacing:0.000px;">3713</span>
<span style="left:69.30px;top:487.64px;font-size:12px;line-height:12px;color:#1a1a1a;font-weight:normal;letter-spacing:-0.214px;">WIP Trim with Bones</span>
<span style="left:405.50px;top:487.64px;font-size:12px;line-height:12px;color:#1a1a1a;font-weight:normal;letter-spacing:-0.166px;">Trim with Bones</span>
<span style="left:959.50px;top:487.64px;font-size:12px;line-height:12px;color:#1a1a1a;font-weight:normal;letter-spacing:0.000px;">0</span>
<span style="left:1053.00px;top:487.64px;font-size:12px;line-height:12px;color:#1a1a1a;font-weight:normal;letter-spacing:0.000px;">0.0</span>
<span style="left:1142.00px;top:487.64px;font-size:12px;line-height:12px;color:#1a1a1a;font-weight:normal;letter-spacing:0.000px;">0</span>
<span style="left:1189.00px;top:487.64px;font-size:12px;line-height:12px;color:#1a1a1a;font-weight:normal;letter-spacing:0.000px;">0.0</span>
<span style="left:1237.00px;top:487.64px;font-size:12px;line-height:12px;color:#1a1a1a;font-weight:normal;letter-spacing:0.000px;">1</span>
<div style="left:6px;top:504px;width:1264px;height:21px;background:#fff"></div>
<div style="left:6px;top:503px;width:1264px;height:1px;background:rgba(0,0,0,0.4)"></div>
<div style="left:6px;top:504px;width:1264px;height:1px;background:#262626"></div>
<div style="left:0px;top:504px;width:6px;height:1px;background:#e6e6e6"></div>
<div style="left:7px;top:510px;width:17px;height:9px"><svg width="17" height="9" viewBox="0 0 17 9"><ellipse cx="5" cy="4.5" rx="3.9" ry="3.1" fill="#e6ebf4" fill-opacity="0.8" stroke="#7485aa" stroke-width="1.4"/><ellipse cx="12" cy="4.5" rx="3.9" ry="3.1" fill="#e6ebf4" fill-opacity="0.8" stroke="#7485aa" stroke-width="1.4"/><path d="M5.5 5 H11.5" stroke="#2c4070" stroke-width="1.3"/></svg></div>
<span style="left:29.30px;top:508.64px;font-size:12px;line-height:12px;color:#1a1a1a;font-weight:normal;letter-spacing:0.000px;">3717</span>
<span style="left:69.30px;top:508.64px;font-size:12px;line-height:12px;color:#1a1a1a;font-weight:normal;letter-spacing:-0.277px;">WIP - Breast Bone Piece</span>
<span style="left:404.50px;top:508.64px;font-size:12px;line-height:12px;color:#1a1a1a;font-weight:normal;letter-spacing:-0.094px;">Shoulder Rib - 1st Rib &amp; Breast Bone</span>
<span style="left:958.50px;top:508.64px;font-size:12px;line-height:12px;color:#1a1a1a;font-weight:normal;letter-spacing:0.000px;">3</span>
<span style="left:1052.00px;top:508.64px;font-size:12px;line-height:12px;color:#1a1a1a;font-weight:normal;letter-spacing:0.000px;">2502.0</span>
<span style="left:1141.00px;top:508.64px;font-size:12px;line-height:12px;color:#1a1a1a;font-weight:normal;letter-spacing:0.000px;">3</span>
<span style="left:1188.00px;top:508.64px;font-size:12px;line-height:12px;color:#1a1a1a;font-weight:normal;letter-spacing:0.000px;">2502.0</span>
<span style="left:1238.00px;top:508.64px;font-size:12px;line-height:12px;color:#1a1a1a;font-weight:normal;letter-spacing:0.000px;">0</span>
<div style="left:6px;top:525px;width:1264px;height:21px;background:#add8e6"></div>
<div style="left:295px;top:525px;width:383px;height:21px;background:#afd3e8"></div>
<div style="left:740px;top:525px;width:194px;height:21px;background:#afd3e8"></div>
<div style="left:6px;top:524px;width:1264px;height:1px;background:rgba(0,0,0,0.4)"></div>
<div style="left:6px;top:525px;width:1264px;height:1px;background:#262626"></div>
<div style="left:0px;top:525px;width:6px;height:1px;background:#e6e6e6"></div>
<div style="left:7px;top:531px;width:17px;height:9px"><svg width="17" height="9" viewBox="0 0 17 9"><ellipse cx="5" cy="4.5" rx="3.9" ry="3.1" fill="#e6ebf4" fill-opacity="0.8" stroke="#7485aa" stroke-width="1.4"/><ellipse cx="12" cy="4.5" rx="3.9" ry="3.1" fill="#e6ebf4" fill-opacity="0.8" stroke="#7485aa" stroke-width="1.4"/><path d="M5.5 5 H11.5" stroke="#2c4070" stroke-width="1.3"/></svg></div>
<span style="left:30.30px;top:529.64px;font-size:12px;line-height:12px;color:#1a1a1a;font-weight:normal;letter-spacing:0.000px;">4003</span>
<span style="left:68.30px;top:529.64px;font-size:12px;line-height:12px;color:#1a1a1a;font-weight:normal;letter-spacing:-0.214px;">Unplanned WIP Loin</span>
<span style="left:404.50px;top:529.64px;font-size:12px;line-height:12px;color:#1a1a1a;font-weight:normal;letter-spacing:-0.180px;">Loin Primal - 1/4, 4/5 Break</span>
<span style="left:958.50px;top:529.64px;font-size:12px;line-height:12px;color:#1a1a1a;font-weight:normal;letter-spacing:0.000px;">-1</span>
<span style="left:1053.00px;top:529.64px;font-size:12px;line-height:12px;color:#1a1a1a;font-weight:normal;letter-spacing:0.000px;">0.0</span>
<span style="left:1141.00px;top:529.64px;font-size:12px;line-height:12px;color:#1a1a1a;font-weight:normal;letter-spacing:0.000px;">1</span>
<span style="left:1189.00px;top:529.64px;font-size:12px;line-height:12px;color:#1a1a1a;font-weight:normal;letter-spacing:0.000px;">0.0</span>
<span style="left:1237.00px;top:529.64px;font-size:12px;line-height:12px;color:#1a1a1a;font-weight:normal;letter-spacing:0.000px;">2</span>
<div style="left:6px;top:546px;width:1264px;height:21px;background:#fff"></div>
<div style="left:6px;top:545px;width:1264px;height:1px;background:rgba(0,0,0,0.4)"></div>
<div style="left:6px;top:546px;width:1264px;height:1px;background:#262626"></div>
<div style="left:0px;top:546px;width:6px;height:1px;background:#e6e6e6"></div>
<div style="left:7px;top:552px;width:17px;height:9px"><svg width="17" height="9" viewBox="0 0 17 9"><ellipse cx="5" cy="4.5" rx="3.9" ry="3.1" fill="#e6ebf4" fill-opacity="0.8" stroke="#7485aa" stroke-width="1.4"/><ellipse cx="12" cy="4.5" rx="3.9" ry="3.1" fill="#e6ebf4" fill-opacity="0.8" stroke="#7485aa" stroke-width="1.4"/><path d="M5.5 5 H11.5" stroke="#2c4070" stroke-width="1.3"/></svg></div>
<span style="left:30.30px;top:550.64px;font-size:12px;line-height:12px;color:#1a1a1a;font-weight:normal;letter-spacing:0.000px;">4004</span>
<span style="left:68.30px;top:550.64px;font-size:12px;line-height:12px;color:#1a1a1a;font-weight:normal;letter-spacing:-0.208px;">Unplanned WIP Belly</span>
<span style="left:404.50px;top:550.64px;font-size:12px;line-height:12px;color:#1a1a1a;font-weight:normal;letter-spacing:-0.176px;">Belly Primal, 4/5 Break</span>
<span style="left:958.50px;top:550.64px;font-size:12px;line-height:12px;color:#1a1a1a;font-weight:normal;letter-spacing:0.000px;">-1</span>
<span style="left:1053.00px;top:550.64px;font-size:12px;line-height:12px;color:#1a1a1a;font-weight:normal;letter-spacing:0.000px;">0.0</span>
<span style="left:1141.00px;top:550.64px;font-size:12px;line-height:12px;color:#1a1a1a;font-weight:normal;letter-spacing:0.000px;">1</span>
<span style="left:1189.00px;top:550.64px;font-size:12px;line-height:12px;color:#1a1a1a;font-weight:normal;letter-spacing:0.000px;">0.0</span>
<span style="left:1237.00px;top:550.64px;font-size:12px;line-height:12px;color:#1a1a1a;font-weight:normal;letter-spacing:0.000px;">2</span>
<div style="left:6px;top:567px;width:1264px;height:21px;background:#add8e6"></div>
<div style="left:295px;top:567px;width:383px;height:21px;background:#afd3e8"></div>
<div style="left:740px;top:567px;width:194px;height:21px;background:#afd3e8"></div>
<div style="left:6px;top:566px;width:1264px;height:1px;background:rgba(0,0,0,0.4)"></div>
<div style="left:6px;top:567px;width:1264px;height:1px;background:#262626"></div>
<div style="left:0px;top:567px;width:6px;height:1px;background:#e6e6e6"></div>
<div style="left:7px;top:573px;width:17px;height:9px"><svg width="17" height="9" viewBox="0 0 17 9"><ellipse cx="5" cy="4.5" rx="3.9" ry="3.1" fill="#e6ebf4" fill-opacity="0.8" stroke="#7485aa" stroke-width="1.4"/><ellipse cx="12" cy="4.5" rx="3.9" ry="3.1" fill="#e6ebf4" fill-opacity="0.8" stroke="#7485aa" stroke-width="1.4"/><path d="M5.5 5 H11.5" stroke="#2c4070" stroke-width="1.3"/></svg></div>
<span style="left:30.30px;top:571.64px;font-size:12px;line-height:12px;color:#1a1a1a;font-weight:normal;letter-spacing:0.000px;">4005</span>
<span style="left:68.30px;top:571.64px;font-size:12px;line-height:12px;color:#1a1a1a;font-weight:normal;letter-spacing:-0.036px;">Unplanned WIP North Packaging</span>
<span style="left:405.50px;top:571.64px;font-size:12px;line-height:12px;color:#1a1a1a;font-weight:normal;letter-spacing:-0.195px;">Trim - Loin</span>
<span style="left:958.50px;top:571.64px;font-size:12px;line-height:12px;color:#1a1a1a;font-weight:normal;letter-spacing:0.000px;">-15</span>
<span style="left:1053.00px;top:571.64px;font-size:12px;line-height:12px;color:#1a1a1a;font-weight:normal;letter-spacing:0.000px;">0.0</span>
<span style="left:1141.00px;top:571.64px;font-size:12px;line-height:12px;color:#1a1a1a;font-weight:normal;letter-spacing:0.000px;">17</span>
<span style="left:1189.00px;top:571.64px;font-size:12px;line-height:12px;color:#1a1a1a;font-weight:normal;letter-spacing:0.000px;">0.0</span>
<span style="left:1237.00px;top:571.64px;font-size:12px;line-height:12px;color:#1a1a1a;font-weight:normal;letter-spacing:0.000px;">32</span>
<div style="left:6px;top:588px;width:1264px;height:21px;background:#fff"></div>
<div style="left:6px;top:587px;width:1264px;height:1px;background:rgba(0,0,0,0.4)"></div>
<div style="left:6px;top:588px;width:1264px;height:1px;background:#262626"></div>
<div style="left:0px;top:588px;width:6px;height:1px;background:#e6e6e6"></div>
<div style="left:7px;top:594px;width:17px;height:9px"><svg width="17" height="9" viewBox="0 0 17 9"><ellipse cx="5" cy="4.5" rx="3.9" ry="3.1" fill="#e6ebf4" fill-opacity="0.8" stroke="#7485aa" stroke-width="1.4"/><ellipse cx="12" cy="4.5" rx="3.9" ry="3.1" fill="#e6ebf4" fill-opacity="0.8" stroke="#7485aa" stroke-width="1.4"/><path d="M5.5 5 H11.5" stroke="#2c4070" stroke-width="1.3"/></svg></div>
<span style="left:29.30px;top:592.64px;font-size:12px;line-height:12px;color:#1a1a1a;font-weight:normal;letter-spacing:0.000px;">5127</span>
<span style="left:68.30px;top:592.64px;font-size:12px;line-height:12px;color:#1a1a1a;font-weight:normal;letter-spacing:-0.178px;">Pork Liver</span>
<span style="left:404.50px;top:592.64px;font-size:12px;line-height:12px;color:#1a1a1a;font-weight:normal;letter-spacing:-0.180px;">Liver</span>
<span style="left:743.80px;top:592.64px;font-size:12px;line-height:12px;color:#1a1a1a;font-weight:normal;letter-spacing:-0.170px;">01-101-27-XP 27box XP Hylife SH</span>
<span style="left:958.50px;top:592.64px;font-size:12px;line-height:12px;color:#1a1a1a;font-weight:normal;letter-spacing:0.000px;">231</span>
<span style="left:1052.00px;top:592.64px;font-size:12px;line-height:12px;color:#1a1a1a;font-weight:normal;letter-spacing:0.000px;">6287.8</span>
<span style="left:1141.00px;top:592.64px;font-size:12px;line-height:12px;color:#1a1a1a;font-weight:normal;letter-spacing:0.000px;">231</span>
<span style="left:1188.00px;top:592.64px;font-size:12px;line-height:12px;color:#1a1a1a;font-weight:normal;letter-spacing:0.000px;">6287.8</span>
<span style="left:1238.00px;top:592.64px;font-size:12px;line-height:12px;color:#1a1a1a;font-weight:normal;letter-spacing:0.000px;">0</span>
<div style="left:6px;top:609px;width:1264px;height:21px;background:#add8e6"></div>
<div style="left:6px;top:608px;width:1264px;height:1px;background:rgba(0,0,0,0.4)"></div>
<div style="left:6px;top:609px;width:1264px;height:1px;background:#262626"></div>
<div style="left:0px;top:609px;width:6px;height:1px;background:#e6e6e6"></div>
<div style="left:7px;top:615px;width:17px;height:9px"><svg width="17" height="9" viewBox="0 0 17 9"><ellipse cx="5" cy="4.5" rx="3.9" ry="3.1" fill="#e6ebf4" fill-opacity="0.8" stroke="#7485aa" stroke-width="1.4"/><ellipse cx="12" cy="4.5" rx="3.9" ry="3.1" fill="#e6ebf4" fill-opacity="0.8" stroke="#7485aa" stroke-width="1.4"/><path d="M5.5 5 H11.5" stroke="#2c4070" stroke-width="1.3"/></svg></div>
<span style="left:29.30px;top:613.64px;font-size:12px;line-height:12px;color:#1a1a1a;font-weight:normal;letter-spacing:0.000px;">5248</span>
<span style="left:68.30px;top:613.64px;font-size:12px;line-height:12px;color:#1a1a1a;font-weight:normal;letter-spacing:-0.180px;">Pork Kidney</span>
<span style="left:404.50px;top:613.64px;font-size:12px;line-height:12px;color:#1a1a1a;font-weight:normal;letter-spacing:-0.170px;">Kidney</span>
<span style="left:743.80px;top:613.64px;font-size:12px;line-height:12px;color:#1a1a1a;font-weight:normal;letter-spacing:-0.496px;">01-101-48-XP 48BOX HYLIFE XP</span>
<span style="left:958.50px;top:613.64px;font-size:12px;line-height:12px;color:#1a1a1a;font-weight:normal;letter-spacing:0.000px;">149</span>
<span style="left:1052.00px;top:613.64px;font-size:12px;line-height:12px;color:#1a1a1a;font-weight:normal;letter-spacing:0.000px;">1490.0</span>
<span style="left:1141.00px;top:613.64px;font-size:12px;line-height:12px;color:#1a1a1a;font-weight:normal;letter-spacing:0.000px;">149</span>
<span style="left:1188.00px;top:613.64px;font-size:12px;line-height:12px;color:#1a1a1a;font-weight:normal;letter-spacing:0.000px;">1490.0</span>
<span style="left:1238.00px;top:613.64px;font-size:12px;line-height:12px;color:#1a1a1a;font-weight:normal;letter-spacing:0.000px;">0</span>
<div style="left:6px;top:630px;width:1264px;height:21px;background:#fff"></div>
<div style="left:6px;top:629px;width:1264px;height:1px;background:rgba(0,0,0,0.4)"></div>
<div style="left:6px;top:630px;width:1264px;height:1px;background:#262626"></div>
<div style="left:0px;top:630px;width:6px;height:1px;background:#e6e6e6"></div>
<div style="left:7px;top:636px;width:17px;height:9px"><svg width="17" height="9" viewBox="0 0 17 9"><ellipse cx="5" cy="4.5" rx="3.9" ry="3.1" fill="#e6ebf4" fill-opacity="0.8" stroke="#7485aa" stroke-width="1.4"/><ellipse cx="12" cy="4.5" rx="3.9" ry="3.1" fill="#e6ebf4" fill-opacity="0.8" stroke="#7485aa" stroke-width="1.4"/><path d="M5.5 5 H11.5" stroke="#2c4070" stroke-width="1.3"/></svg></div>
<span style="left:29.30px;top:634.64px;font-size:12px;line-height:12px;color:#1a1a1a;font-weight:normal;letter-spacing:0.000px;">5338</span>
<span style="left:68.30px;top:634.64px;font-size:12px;line-height:12px;color:#1a1a1a;font-weight:normal;letter-spacing:-0.195px;">Pork Stomach (S)</span>
<span style="left:404.50px;top:634.64px;font-size:12px;line-height:12px;color:#1a1a1a;font-weight:normal;letter-spacing:-0.157px;">Stomachs</span>
<span style="left:743.80px;top:634.64px;font-size:12px;line-height:12px;color:#1a1a1a;font-weight:normal;letter-spacing:-0.202px;">01-101-38-099 38box Hylife SH</span>
<span style="left:958.50px;top:634.64px;font-size:12px;line-height:12px;color:#1a1a1a;font-weight:normal;letter-spacing:0.000px;">108</span>
<span style="left:1052.00px;top:634.64px;font-size:12px;line-height:12px;color:#1a1a1a;font-weight:normal;letter-spacing:0.000px;">1620.0</span>
<span style="left:1141.00px;top:634.64px;font-size:12px;line-height:12px;color:#1a1a1a;font-weight:normal;letter-spacing:0.000px;">109</span>
<span style="left:1188.00px;top:634.64px;font-size:12px;line-height:12px;color:#1a1a1a;font-weight:normal;letter-spacing:0.000px;">1635.0</span>
<span style="left:1238.00px;top:634.64px;font-size:12px;line-height:12px;color:#1a1a1a;font-weight:normal;letter-spacing:0.000px;">0</span>
<div style="left:6px;top:651px;width:1264px;height:21px;background:#add8e6"></div>
<div style="left:6px;top:650px;width:1264px;height:1px;background:rgba(0,0,0,0.4)"></div>
<div style="left:6px;top:651px;width:1264px;height:1px;background:#262626"></div>
<div style="left:0px;top:651px;width:6px;height:1px;background:#e6e6e6"></div>
<div style="left:7px;top:657px;width:17px;height:9px"><svg width="17" height="9" viewBox="0 0 17 9"><ellipse cx="5" cy="4.5" rx="3.9" ry="3.1" fill="#e6ebf4" fill-opacity="0.8" stroke="#7485aa" stroke-width="1.4"/><ellipse cx="12" cy="4.5" rx="3.9" ry="3.1" fill="#e6ebf4" fill-opacity="0.8" stroke="#7485aa" stroke-width="1.4"/><path d="M5.5 5 H11.5" stroke="#2c4070" stroke-width="1.3"/></svg></div>
<span style="left:29.30px;top:655.64px;font-size:12px;line-height:12px;color:#1a1a1a;font-weight:normal;letter-spacing:0.000px;">5527</span>
<span style="left:68.30px;top:655.64px;font-size:12px;line-height:12px;color:#1a1a1a;font-weight:normal;letter-spacing:-0.187px;">Pork Heart</span>
<span style="left:404.50px;top:655.64px;font-size:12px;line-height:12px;color:#1a1a1a;font-weight:normal;letter-spacing:-0.180px;">Heart</span>
<span style="left:743.80px;top:655.64px;font-size:12px;line-height:12px;color:#1a1a1a;font-weight:normal;letter-spacing:-0.170px;">01-101-27-XP 27box XP Hylife SH</span>
<span style="left:958.50px;top:655.64px;font-size:12px;line-height:12px;color:#1a1a1a;font-weight:normal;letter-spacing:0.000px;">60</span>
<span style="left:1052.00px;top:655.64px;font-size:12px;line-height:12px;color:#1a1a1a;font-weight:normal;letter-spacing:0.000px;">1633.2</span>
<span style="left:1141.00px;top:655.64px;font-size:12px;line-height:12px;color:#1a1a1a;font-weight:normal;letter-spacing:0.000px;">61</span>
<span style="left:1188.00px;top:655.64px;font-size:12px;line-height:12px;color:#1a1a1a;font-weight:normal;letter-spacing:0.000px;">1660.4</span>
<span style="left:1238.00px;top:655.64px;font-size:12px;line-height:12px;color:#1a1a1a;font-weight:normal;letter-spacing:0.000px;">0</span>
<div style="left:5px;top:0px;width:1px;height:662px;background:#e9e9e9"></div>
<div style="left:26px;top:1px;width:1px;height:662px;background:#2a2a2a"></div>
<div style="left:27px;top:1px;width:1px;height:662px;background:#5e5e5e"></div>
<div style="left:65px;top:1px;width:1px;height:662px;background:#2a2a2a"></div>
<div style="left:66px;top:1px;width:1px;height:662px;background:#5e5e5e"></div>
<div style="left:401px;top:1px;width:1px;height:662px;background:#222"></div>
<div style="left:402px;top:1px;width:1px;height:662px;background:rgba(0,0,0,0.15)"></div>
<div style="left:740px;top:1px;width:1px;height:662px;background:#222"></div>
<div style="left:741px;top:1px;width:1px;height:662px;background:rgba(0,0,0,0.12)"></div>
<div style="left:954px;top:1px;width:1px;height:662px;background:#5e5e5e"></div>
<div style="left:955px;top:1px;width:1px;height:662px;background:#2a2a2a"></div>
<div style="left:1049px;top:1px;width:1px;height:662px;background:#5e5e5e"></div>
<div style="left:1050px;top:1px;width:1px;height:662px;background:#2a2a2a"></div>
<div style="left:1137px;top:1px;width:1px;height:662px;background:#4a4a4a"></div>
<div style="left:1138px;top:1px;width:1px;height:662px;background:#4a4a4a"></div>
<div style="left:1185px;top:1px;width:1px;height:662px;background:#4a4a4a"></div>
<div style="left:1186px;top:1px;width:1px;height:662px;background:#4a4a4a"></div>
<div style="left:1233px;top:1px;width:1px;height:662px;background:#4a4a4a"></div>
<div style="left:1234px;top:1px;width:1px;height:662px;background:#4a4a4a"></div>
</div>
<div style="left:1487px;top:137px;width:17px;height:685px;background:#f0f0f0"></div>
<div style="left:1488px;top:178px;width:15px;height:122px;background:#cdcdcd"></div>
<svg style="left:1489px;top:165px;" width="13" height="10" viewBox="0 0 13 10"><path d="M2 7.5 L6.5 3 L11 7.5" stroke="#a0a0a0" stroke-width="1.2" fill="none"/></svg>
<svg style="left:1489px;top:808px;" width="13" height="10" viewBox="0 0 13 10"><path d="M2 2.5 L6.5 7 L11 2.5" stroke="#a0a0a0" stroke-width="1.2" fill="none"/></svg>
<div style="left:217px;top:822px;width:1270px;height:16px;background:#f0f0f0"></div>
<div style="left:1487px;top:822px;width:17px;height:16px;background:#f0f0f0"></div>
<div style="left:240px;top:823px;width:711px;height:15px;background:#cdcdcd"></div>
<svg style="left:226px;top:824px;" width="10" height="13" viewBox="0 0 10 13"><path d="M7 2 L3 6.5 L7 11" stroke="#a0a0a0" stroke-width="1.2" fill="none"/></svg>
<svg style="left:1473px;top:824px;" width="10" height="13" viewBox="0 0 10 13"><path d="M3 2 L7 6.5 L3 11" stroke="#a0a0a0" stroke-width="1.2" fill="none"/></svg>
<div style="left:3px;top:47px;width:204px;height:797px;background:#2e343c;border-radius:5px"></div>
<div style="left:6px;top:49px;width:199px;height:719px;background:#fff;border-radius:3px 0 4px 4px"></div>
<div style="left:8px;top:469px;width:20px;height:20px;box-sizing:border-box;border:1px solid #d0d0d0;background:#fafafa"></div>
<svg style="left:10px;top:471px;" width="16" height="16" viewBox="0 0 16 16"><path d="M3 3 L13 13 M13 3 L3 13" stroke="#f5b5b0" stroke-width="1.4"/></svg>
<div style="left:30px;top:467px;width:173px;height:23px;box-sizing:border-box;border:1px solid #b9b9b9;background:linear-gradient(#f2f2f2,#e4e4e4)"></div>
<svg style="left:190px;top:475px;" width="8" height="6" viewBox="0 0 8 6"><path d="M1 1 L4 4 L7 1" stroke="#444" stroke-width="1.2" fill="none"/></svg>
<span style="left:11.60px;top:497.69px;font-size:11px;line-height:11px;color:#222;font-weight:normal;letter-spacing:-0.042px;">Storage Type:</span>
<div style="left:8px;top:520px;width:20px;height:20px;box-sizing:border-box;border:1px solid #d0d0d0;background:#fafafa"></div>
<svg style="left:10px;top:522px;" width="16" height="16" viewBox="0 0 16 16"><path d="M3 3 L13 13 M13 3 L3 13" stroke="#f5b5b0" stroke-width="1.4"/></svg>
<div style="left:30px;top:518px;width:173px;height:23px;box-sizing:border-box;border:1px solid #b9b9b9;background:linear-gradient(#f2f2f2,#e4e4e4)"></div>
<svg style="left:190px;top:526px;" width="8" height="6" viewBox="0 0 8 6"><path d="M1 1 L4 4 L7 1" stroke="#444" stroke-width="1.2" fill="none"/></svg>
<span style="left:11.60px;top:548.69px;font-size:11px;line-height:11px;color:#222;font-weight:normal;letter-spacing:-0.188px;">Box Type:</span>
<div style="left:8px;top:571px;width:20px;height:20px;box-sizing:border-box;border:1px solid #d0d0d0;background:#fafafa"></div>
<svg style="left:10px;top:573px;" width="16" height="16" viewBox="0 0 16 16"><path d="M3 3 L13 13 M13 3 L3 13" stroke="#f5b5b0" stroke-width="1.4"/></svg>
<div style="left:30px;top:569px;width:173px;height:23px;box-sizing:border-box;border:1px solid #b9b9b9;background:linear-gradient(#f2f2f2,#e4e4e4)"></div>
<svg style="left:190px;top:577px;" width="8" height="6" viewBox="0 0 8 6"><path d="M1 1 L4 4 L7 1" stroke="#444" stroke-width="1.2" fill="none"/></svg>
<span style="left:11.60px;top:599.69px;font-size:11px;line-height:11px;color:#222;font-weight:normal;letter-spacing:-0.083px;">Packing Type:</span>
<div style="left:8px;top:622px;width:20px;height:20px;box-sizing:border-box;border:1px solid #d0d0d0;background:#fafafa"></div>
<svg style="left:10px;top:624px;" width="16" height="16" viewBox="0 0 16 16"><path d="M3 3 L13 13 M13 3 L3 13" stroke="#f5b5b0" stroke-width="1.4"/></svg>
<div style="left:30px;top:620px;width:173px;height:23px;box-sizing:border-box;border:1px solid #b9b9b9;background:linear-gradient(#f2f2f2,#e4e4e4)"></div>
<svg style="left:190px;top:628px;" width="8" height="6" viewBox="0 0 8 6"><path d="M1 1 L4 4 L7 1" stroke="#444" stroke-width="1.2" fill="none"/></svg>
<span style="left:11.60px;top:650.69px;font-size:11px;line-height:11px;color:#222;font-weight:normal;letter-spacing:-0.021px;">Packaging Item:</span>
<div style="left:8px;top:673px;width:20px;height:20px;box-sizing:border-box;border:1px solid #d0d0d0;background:#fafafa"></div>
<svg style="left:10px;top:675px;" width="16" height="16" viewBox="0 0 16 16"><path d="M3 3 L13 13 M13 3 L3 13" stroke="#f5b5b0" stroke-width="1.4"/></svg>
<div style="left:30px;top:671px;width:173px;height:23px;box-sizing:border-box;border:1px solid #b9b9b9;background:linear-gradient(#f2f2f2,#e4e4e4)"></div>
<svg style="left:190px;top:679px;" width="8" height="6" viewBox="0 0 8 6"><path d="M1 1 L4 4 L7 1" stroke="#444" stroke-width="1.2" fill="none"/></svg>
<div style="left:12px;top:714px;width:186px;height:19px;box-sizing:border-box;border:1px solid #929292;background:#dedede"></div>
<span style="left:89.50px;top:718.39px;font-size:11px;line-height:11px;color:#000;font-weight:bold;letter-spacing:-0.050px;">Apply</span>
<div style="left:12px;top:743px;width:186px;height:18px;box-sizing:border-box;border:1px solid #929292;background:#dedede"></div>
<span style="left:91.00px;top:747.29px;font-size:11px;line-height:11px;color:#222;font-weight:normal;letter-spacing:-0.525px;">Reset</span>
<div style="left:8px;top:0px;width:729px;height:472px;box-sizing:border-box;border:1px solid #8c8c8c;background:#fff"></div>
<svg style="left:17px;top:7px;" width="15" height="15" viewBox="0 0 15 15"><circle cx="7.5" cy="7.5" r="7" fill="#2b6f91"/><circle cx="7.5" cy="7.5" r="5.2" fill="none" stroke="#9cc3d6" stroke-width="0.9"/><path d="M3.5 7.5 H11.5" stroke="#cfe3ee" stroke-width="1.2"/></svg>
<span style="left:36.70px;top:9.84px;font-size:12px;line-height:12px;color:#000;font-weight:normal;letter-spacing:-0.533px;">Save As</span>
<svg style="left:714px;top:8px;" width="14" height="14" viewBox="0 0 14 14"><path d="M2 2 L12 12 M12 2 L2 12" stroke="#000" stroke-width="1.1"/></svg>
<svg style="left:20px;top:44px;" width="15" height="13" viewBox="0 0 15 13"><path d="M14 6.5 H2 M7 1 L1.5 6.5 L7 12" stroke="#cccccc" stroke-width="1.3" fill="none"/></svg>
<svg style="left:50px;top:44px;" width="15" height="13" viewBox="0 0 15 13"><path d="M1 6.5 H13 M8 1 L13.5 6.5 L8 12" stroke="#cccccc" stroke-width="1.3" fill="none"/></svg>
<svg style="left:77px;top:46px;" width="8" height="7" viewBox="0 0 8 7"><path d="M1 2 L4 5 L7 2" stroke="#cccccc" stroke-width="1" fill="none"/></svg>
<svg style="left:95px;top:44px;" width="13" height="14" viewBox="0 0 13 14"><path d="M6.5 13.5 V1.5 M1 7 L6.5 1.5 L12 7" stroke="#666" stroke-width="1.4" fill="none"/></svg>
<div style="left:114px;top:35px;width:396px;height:31px;box-sizing:border-box;border:1px solid #d9d9d9;background:#fff"></div>
<div style="left:476px;top:36px;width:1px;height:29px;background:#d9d9d9"></div>
<svg style="left:117px;top:43px;" width="17" height="13" viewBox="0 0 17 13"><rect x="0.5" y="0.5" width="16" height="11.5" rx="1" fill="#1e90f0" stroke="#1a6fcf" stroke-width="1"/><path d="M2 2 L8 2 L3 9 Z" fill="#58b3ff" opacity="0.5"/><rect x="1" y="10.5" width="15" height="1.5" fill="#0c4f9a"/></svg>
<svg style="left:139px;top:46px;" width="6" height="9" viewBox="0 0 6 9"><path d="M1.5 1.5 L4.5 4.5 L1.5 7.5" stroke="#777" stroke-width="1.3" fill="none"/></svg>
<span style="left:154.90px;top:44.34px;font-size:12px;line-height:12px;color:#333;font-weight:normal;letter-spacing:-0.750px;">This PC</span>
<svg style="left:202px;top:46px;" width="6" height="9" viewBox="0 0 6 9"><path d="M1.5 1.5 L4.5 4.5 L1.5 7.5" stroke="#777" stroke-width="1.3" fill="none"/></svg>
<span style="left:215.70px;top:44.34px;font-size:12px;line-height:12px;color:#333;font-weight:normal;letter-spacing:-0.083px;">Desktop</span>
<svg style="left:455px;top:47px;" width="12" height="8" viewBox="0 0 12 8"><path d="M1.5 1.5 L6 6 L10.5 1.5" stroke="#555" stroke-width="1.4" fill="none"/></svg>
<svg style="left:487px;top:43px;" width="15" height="15" viewBox="0 0 15 15"><path d="M11.5 7.5 A4.5 4.5 0 1 1 7.5 3" stroke="#555" stroke-width="1.4" fill="none"/><path d="M6 0.8 L8.8 3 L6 5.2" stroke="#555" stroke-width="1.3" fill="none"/></svg>
<div style="left:522px;top:35px;width:202px;height:31px;box-sizing:border-box;border:1px solid #d9d9d9;background:#fff"></div>
<svg style="left:535px;top:42px;" width="16" height="16" viewBox="0 0 16 16"><circle cx="9.5" cy="6" r="4.3" stroke="#777" stroke-width="1.1" fill="none"/><path d="M6.5 9 L1.5 14" stroke="#a86c4e" stroke-width="1.2"/></svg>
<span style="left:562.50px;top:44.54px;font-size:12px;line-height:12px;color:#6d6d6d;font-weight:normal;letter-spacing:-0.308px;">Search Desktop</span>
<div style="left:9px;top:72px;width:727px;height:31px;background:#f5f6f7"></div>
<span style="left:25.80px;top:80.84px;font-size:12px;line-height:12px;color:#1e395b;font-weight:normal;letter-spacing:-0.043px;">Organize</span>
<svg style="left:79px;top:84px;" width="9" height="6" viewBox="0 0 9 6"><path d="M0.5 0.5 H8.5 L4.5 5 Z" fill="#1e395b"/></svg>
<span style="left:116.70px;top:80.84px;font-size:12px;line-height:12px;color:#1e395b;font-weight:normal;letter-spacing:0.178px;">New folder</span>
<svg style="left:641px;top:80px;" width="18" height="15" viewBox="0 0 18 15"><rect x="1.5" y="0.5" width="4.5" height="13" rx="0.8" fill="#fff" stroke="#9a9a9a" stroke-width="1"/><circle cx="3.75" cy="3" r="0.9" fill="#6aa86a"/><circle cx="3.75" cy="7" r="0.9" fill="#5a9ae0"/><circle cx="3.75" cy="11" r="0.9" fill="#e05050"/><path d="M7.5 3 H11 M13 3 H17 M7.5 7 H11 M13 7 H17 M7.5 11 H11 M13 11 H17" stroke="#8a8a8a" stroke-width="1.3"/></svg>
<svg style="left:667px;top:85px;" width="9" height="6" viewBox="0 0 9 6"><path d="M0.5 0.5 H8.5 L4.5 5 Z" fill="#1e395b"/></svg>
<svg style="left:704px;top:79px;" width="18" height="18" viewBox="0 0 18 18"><circle cx="9" cy="9" r="8.2" fill="#1160b8"/><text x="9" y="14" text-anchor="middle" font-family="Liberation Sans" font-weight="bold" font-size="13" fill="#fff">?</text></svg>
<div style="left:148px;top:103px;width:16px;height:250px;background:#f0f0f0"></div>
<div style="left:149px;top:121px;width:14px;height:117px;background:#cdcdcd"></div>
<svg style="left:150px;top:108px;" width="12" height="9" viewBox="0 0 12 9"><path d="M2 6.5 L6 2.5 L10 6.5" stroke="#333" stroke-width="1.3" fill="none"/></svg>
<svg style="left:150px;top:341px;" width="12" height="9" viewBox="0 0 12 9"><path d="M2 2.5 L6 6.5 L10 2.5" stroke="#333" stroke-width="1.3" fill="none"/></svg>
<div style="left:164px;top:103px;width:1px;height:235px;background:#f0f0f0"></div>
<div style="left:10px;top:295px;width:137px;height:24px;background:#d9d9d9"></div>
<svg style="left:33px;top:122px;" width="17" height="16" viewBox="0 0 17 16"><path d="M10 1.5 L11.9 6 L16.5 6.2 L12.9 9.2 L14.1 13.8 L10 11.2 L5.9 13.8 L7.1 9.2 L3.5 6.2 L8.1 6 Z" fill="#3a96dd"/><path d="M1 9 H4 M0.5 11.5 H4.5 M2 14 H5" stroke="#7ab8ea" stroke-width="1"/></svg>
<span style="left:52.60px;top:125.74px;font-size:12px;line-height:12px;color:#000;font-weight:normal;letter-spacing:-0.182px;">Quick access</span>
<div style="left:40px;top:148px;width:17px;height:13px"><svg width="17" height="13" viewBox="0 0 17 13"><rect x="0.5" y="0.5" width="16" height="12" fill="#2b9bf4" stroke="#1b7fd8"/><path d="M2 1.5 L9 1.5 L3 8 Z" fill="#5cb8ff" opacity="0.5"/><rect x="1" y="10" width="15" height="1.2" fill="#0b3f7a"/></svg></div>
<span style="left:60.80px;top:149.74px;font-size:12px;line-height:12px;color:#000;font-weight:normal;letter-spacing:-0.083px;">Desktop</span>
<svg style="left:40px;top:171px;" width="17" height="17" viewBox="0 0 17 17"><path d="M6 0.5 H11 V8 H16 L8.5 16.5 L1 8 H6 Z" fill="#3b87dd"/></svg>
<span style="left:60.80px;top:173.74px;font-size:12px;line-height:12px;color:#000;font-weight:normal;letter-spacing:0.062px;">Downloads</span>
<div style="left:42px;top:195px;width:13px;height:16px"><svg width="13" height="16" viewBox="0 0 13 16"><path d="M0.5 0.5 H9 L12.5 4 V15.5 H0.5 Z" fill="#fff" stroke="#777"/><path d="M3 5 H10 M3 8 H10 M3 11 H10" stroke="#3a8ad8" stroke-width="1.2"/></svg></div>
<span style="left:60.80px;top:197.74px;font-size:12px;line-height:12px;color:#000;font-weight:normal;letter-spacing:0.188px;">Documents</span>
<svg style="left:40px;top:221px;" width="16" height="13" viewBox="0 0 16 13"><rect x="0.5" y="0.5" width="15" height="12" fill="#fff" stroke="#888"/><rect x="2" y="2" width="12" height="9" fill="#8fc4ea"/><path d="M2 11 L2 8 Q7 5 14 8 V11 Z" fill="#2e6b3a"/></svg>
<span style="left:60.80px;top:221.74px;font-size:12px;line-height:12px;color:#000;font-weight:normal;letter-spacing:-0.214px;">Pictures</span>
<svg style="left:133px;top:148px;" width="12" height="12" viewBox="0 0 12 12"><path d="M3 9 L1 11 M4 5 L7 8 M6 3 L9 6 L10.5 4.5 L7.5 1.5 Z M3.5 5.5 L6.5 8.5" stroke="#8a8a8a" stroke-width="1.6" fill="#8a8a8a"/></svg>
<svg style="left:133px;top:172px;" width="12" height="12" viewBox="0 0 12 12"><path d="M3 9 L1 11 M4 5 L7 8 M6 3 L9 6 L10.5 4.5 L7.5 1.5 Z M3.5 5.5 L6.5 8.5" stroke="#8a8a8a" stroke-width="1.6" fill="#8a8a8a"/></svg>
<svg style="left:133px;top:196px;" width="12" height="12" viewBox="0 0 12 12"><path d="M3 9 L1 11 M4 5 L7 8 M6 3 L9 6 L10.5 4.5 L7.5 1.5 Z M3.5 5.5 L6.5 8.5" stroke="#8a8a8a" stroke-width="1.6" fill="#8a8a8a"/></svg>
<svg style="left:133px;top:220px;" width="12" height="12" viewBox="0 0 12 12"><path d="M3 9 L1 11 M4 5 L7 8 M6 3 L9 6 L10.5 4.5 L7.5 1.5 Z M3.5 5.5 L6.5 8.5" stroke="#8a8a8a" stroke-width="1.6" fill="#8a8a8a"/></svg>
<svg style="left:31px;top:251px;" width="18" height="17" viewBox="0 0 18 17"><rect x="0.5" y="0.5" width="17" height="12" fill="#6cc5f5" stroke="#3a8fd0"/><path d="M6 14.5 H12 M3 16 H15" stroke="#5a6a7a" stroke-width="1.2"/></svg>
<span style="left:53.50px;top:252.54px;font-size:12px;line-height:12px;color:#000;font-weight:normal;letter-spacing:-0.667px;">This PC</span>
<svg style="left:40px;top:274px;" width="17" height="17" viewBox="0 0 17 17"><path d="M8.5 1 L16 4 V13 L8.5 16 L1 13 V4 Z" fill="#3cc0d0"/><path d="M8.5 7 L16 4 V13 L8.5 16 Z" fill="#1b7f9a"/><path d="M1 4 L8.5 7 L16 4 L8.5 1 Z" fill="#9be8f0"/></svg>
<span style="left:60.70px;top:276.44px;font-size:12px;line-height:12px;color:#000;font-weight:normal;letter-spacing:-0.167px;">3D Objects</span>
<div style="left:40px;top:300px;width:17px;height:13px"><svg width="17" height="13" viewBox="0 0 17 13"><rect x="0.5" y="0.5" width="16" height="12" fill="#2b9bf4" stroke="#1b7fd8"/><path d="M2 1.5 L9 1.5 L3 8 Z" fill="#5cb8ff" opacity="0.5"/><rect x="1" y="10" width="15" height="1.2" fill="#0b3f7a"/></svg></div>
<span style="left:60.70px;top:300.14px;font-size:12px;line-height:12px;color:#000;font-weight:normal;letter-spacing:-0.083px;">Desktop</span>
<div style="left:42px;top:323px;width:13px;height:16px"><svg width="13" height="16" viewBox="0 0 13 16"><path d="M0.5 0.5 H9 L12.5 4 V15.5 H0.5 Z" fill="#fff" stroke="#777"/><path d="M3 5 H10 M3 8 H10 M3 11 H10" stroke="#3a8ad8" stroke-width="1.2"/></svg></div>
<span style="left:60.70px;top:324.34px;font-size:12px;line-height:12px;color:#000;font-weight:normal;letter-spacing:0.188px;">Documents</span>
<div style="left:9px;top:340px;width:139px;height:13px;overflow:hidden">
<svg style="left:32px;top:7px" width="8" height="10"><rect x="1" y="0" width="5" height="10" fill="#2f7fd8"/></svg>
<span style="left:51.70px;top:8.34px;font-size:12px;line-height:12px;color:#000;font-weight:normal;letter-spacing:0.062px;">Downloads</span>
</div>
<span style="left:184.40px;top:109.84px;font-size:12px;line-height:12px;color:#4c607a;font-weight:normal;letter-spacing:0.767px;">Name</span>
<svg style="left:359px;top:102px;" width="10" height="6" viewBox="0 0 10 6"><path d="M1 5 L5 1 L9 5" stroke="#888" stroke-width="1" fill="none"/></svg>
<div style="left:548px;top:103px;width:1px;height:25px;background:#e5e5e5"></div>
<div style="left:692px;top:103px;width:1px;height:25px;background:#e5e5e5"></div>
<span style="left:554.30px;top:109.84px;font-size:12px;line-height:12px;color:#4c607a;font-weight:normal;letter-spacing:0.250px;">Date modified</span>
<span style="left:699.30px;top:109.84px;font-size:12px;line-height:12px;color:#4c607a;font-weight:normal;letter-spacing:0.333px;">Type</span>
<div style="left:165px;top:103px;width:571px;height:235px;overflow:hidden">
<div style="left:23px;top:33.2px;width:13px;height:17px"><svg width="13" height="17" viewBox="0 0 13 17"><path d="M0.5 0.5 H9 L12.5 4 V16.5 H0.5 Z" fill="#f7f8fa" stroke="#9a9a9a"/><path d="M9 0.5 V4 H12.5" fill="none" stroke="#9a9a9a"/></svg></div>
<span style="left:40.70px;top:35.54px;font-size:12px;line-height:12px;color:#000;font-weight:normal;letter-spacing:-0.161px;">Planned Vs Actual for 28-04-2025 - Shift 1.xlsx</span>
<span style="left:390.30px;top:35.54px;font-size:12px;line-height:12px;color:#6d6d6d;font-weight:normal;letter-spacing:-0.275px;">4/28/2025 2:56 PM</span>
<span style="left:533.30px;top:35.54px;font-size:12px;line-height:12px;color:#6d6d6d;font-weight:normal;letter-spacing:-0.875px;">XLSX File</span>
<div style="left:23px;top:54.2px;width:13px;height:17px"><svg width="13" height="17" viewBox="0 0 13 17"><path d="M0.5 0.5 H9 L12.5 4 V16.5 H0.5 Z" fill="#f7f8fa" stroke="#9a9a9a"/><path d="M9 0.5 V4 H12.5" fill="none" stroke="#9a9a9a"/></svg></div>
<span style="left:40.70px;top:56.54px;font-size:12px;line-height:12px;color:#000;font-weight:normal;letter-spacing:-0.138px;">Production Records for 21-04-2025 - Shift 1.xlsx</span>
<span style="left:390.30px;top:56.54px;font-size:12px;line-height:12px;color:#6d6d6d;font-weight:normal;letter-spacing:-0.131px;">4/29/2025 9:15 AM</span>
<span style="left:533.30px;top:56.54px;font-size:12px;line-height:12px;color:#6d6d6d;font-weight:normal;letter-spacing:-0.875px;">XLSX File</span>
<div style="left:23px;top:75.2px;width:13px;height:17px"><svg width="13" height="17" viewBox="0 0 13 17"><path d="M0.5 0.5 H9 L12.5 4 V16.5 H0.5 Z" fill="#f7f8fa" stroke="#9a9a9a"/><path d="M9 0.5 V4 H12.5" fill="none" stroke="#9a9a9a"/></svg></div>
<span style="left:40.70px;top:77.54px;font-size:12px;line-height:12px;color:#000;font-weight:normal;letter-spacing:-0.232px;">Route Graph 3-HYF latest.xlsx</span>
<span style="left:390.30px;top:77.54px;font-size:12px;line-height:12px;color:#6d6d6d;font-weight:normal;letter-spacing:-0.200px;">4/25/2025 10:01 AM</span>
<span style="left:533.30px;top:77.54px;font-size:12px;line-height:12px;color:#6d6d6d;font-weight:normal;letter-spacing:-0.875px;">XLSX File</span>
</div>
<div style="left:165px;top:338px;width:571px;height:15px;background:#f0f0f0"></div>
<div style="left:185px;top:338px;width:413px;height:15px;background:#cdcdcd"></div>
<svg style="left:170px;top:340px;" width="10" height="11" viewBox="0 0 10 11"><path d="M6.5 2 L3 5.5 L6.5 9" stroke="#333" stroke-width="1.3" fill="none"/></svg>
<svg style="left:722px;top:340px;" width="10" height="11" viewBox="0 0 10 11"><path d="M3.5 2 L7 5.5 L3.5 9" stroke="#333" stroke-width="1.3" fill="none"/></svg>
<div style="left:9px;top:353px;width:727px;height:118px;background:#f0f0f0"></div>
<span style="left:73.10px;top:370.44px;font-size:12px;line-height:12px;color:#000;font-weight:normal;letter-spacing:-0.011px;">File name:</span>
<div style="left:133px;top:365px;width:598px;height:23px;box-sizing:border-box;border:1px solid #0078d7;background:#fff"></div>
<div style="left:139px;top:369px;width:228px;height:15px;background:#0078d7"></div>
<span style="left:138.70px;top:370.44px;font-size:12px;line-height:12px;color:#fff;font-weight:normal;letter-spacing:-0.119px;">Production Records for 21-04-2025 - Shift 1</span>
<svg style="left:715px;top:372px;" width="12" height="8" viewBox="0 0 12 8"><path d="M1.5 1.5 L6 6 L10.5 1.5" stroke="#444" stroke-width="1.2" fill="none"/></svg>
<span style="left:60.40px;top:396.34px;font-size:12px;line-height:12px;color:#000;font-weight:normal;letter-spacing:-0.367px;">Save as type:</span>
<div style="left:133px;top:391px;width:598px;height:22px;box-sizing:border-box;border:1px solid #bcbcbc;background:#e5e5e5"></div>
<span style="left:136.60px;top:396.34px;font-size:12px;line-height:12px;color:#000;font-weight:normal;letter-spacing:-0.068px;">Excel Workbook (*.xlsx)</span>
<svg style="left:715px;top:398px;" width="12" height="8" viewBox="0 0 12 8"><path d="M1.5 1.5 L6 6 L10.5 1.5" stroke="#444" stroke-width="1.2" fill="none"/></svg>
<svg style="left:20px;top:444px;" width="12" height="8" viewBox="0 0 12 8"><path d="M1.5 6.5 L6 2 L10.5 6.5" stroke="#333" stroke-width="1.5" fill="none"/></svg>
<span style="left:37.90px;top:442.54px;font-size:12px;line-height:12px;color:#000;font-weight:normal;letter-spacing:-0.118px;">Hide Folders</span>
<div style="left:532px;top:434px;width:86px;height:24px;box-sizing:border-box;border:2px solid #0078d7;background:#e1e1e1"></div>
<span style="left:562.40px;top:439.84px;font-size:12px;line-height:12px;color:#000;font-weight:normal;letter-spacing:-0.767px;">Save</span>
<div style="left:632px;top:434px;width:86px;height:23px;box-sizing:border-box;border:1px solid #adadad;background:#e1e1e1"></div>
<span style="left:656.50px;top:439.54px;font-size:12px;line-height:12px;color:#000;font-weight:normal;letter-spacing:-0.140px;">Cancel</span>
<svg style="left:725px;top:459px;" width="10" height="10" viewBox="0 0 10 10"><g fill="#b8b8b8"><rect x="7" y="1" width="2" height="2"/><rect x="4" y="4" width="2" height="2"/><rect x="7" y="4" width="2" height="2"/><rect x="1" y="7" width="2" height="2"/><rect x="4" y="7" width="2" height="2"/><rect x="7" y="7" width="2" height="2"/></g></svg>
<div style="left:523px;top:422px;width:105px;height:47px;box-sizing:border-box;border:5px solid #ff3b10"></div>
</body></html>
